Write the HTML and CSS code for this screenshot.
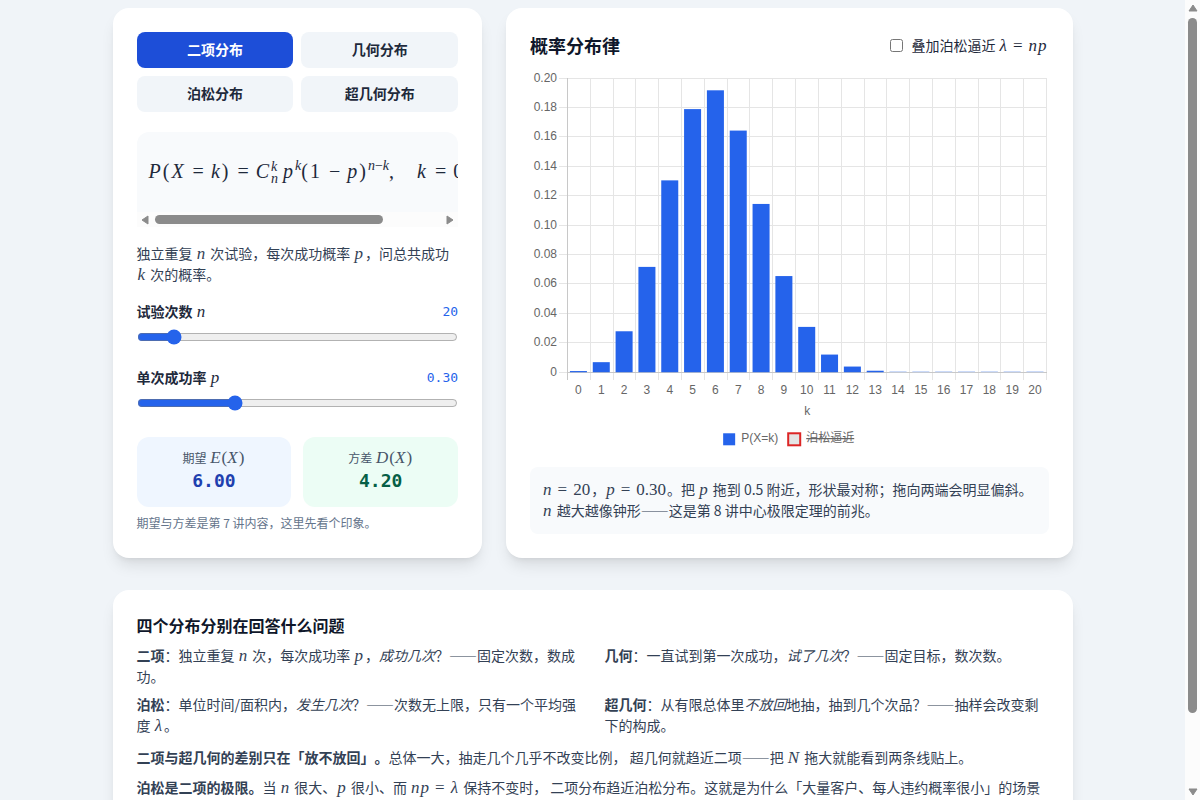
FILE: index.html
```html
<!DOCTYPE html>
<html lang="zh-CN">
<head>
<meta charset="utf-8">
<meta name="viewport" content="width=device-width, initial-scale=1">
<title>概率分布律</title>
<link rel="stylesheet" href="styles.css">
</head>
<body>
<div class="viewport">
<main class="page">
  <div class="top-grid">
    <section class="card">
      <div class="tabs">
        <button type="button" class="tab tab-active">二项分布</button>
        <button type="button" class="tab">几何分布</button>
        <button type="button" class="tab">泊松分布</button>
        <button type="button" class="tab">超几何分布</button>
      </div>
      <div class="formula-box">
        <div class="formula-view">
          <div class="formula"><i>P</i><span>(</span><i>X</i><b>=</b><i>k</i><span>)</span><b>=</b><i>C</i><span class="script-pair"><i>k</i><i>n</i></span><i>p</i><sup><i>k</i></sup><span>(</span><span>1</span><b>−</b><i>p</i><span>)</span><sup><i>n</i>−<i>k</i></sup><span class="comma">,</span><i>k</i><b>=</b><span>0</span></div>
        </div>
        <div class="bar-x" aria-hidden="true">
          <svg class="arrow" viewBox="0 0 8 10"><path d="M7 1v8L1 5z"/></svg>
          <div class="track"><div class="thumb"></div></div>
          <svg class="arrow" viewBox="0 0 8 10"><path d="M1 1v8l6-4z"/></svg>
        </div>
      </div>
      <p class="desc">独立重复 <i class="m">n</i> 次试验，每次成功概率 <i class="m">p</i>，问总共成功 <i class="m">k</i> 次的概率。</p>
      <div class="field">
        <div class="field-head"><label for="trials">试验次数 <i class="m">n</i></label><output for="trials">20</output></div>
        <input id="trials" type="range" min="1" max="200" value="20">
      </div>
      <div class="field">
        <div class="field-head"><label for="prob">单次成功率 <i class="m">p</i></label><output for="prob">0.30</output></div>
        <input id="prob" type="range" min="0.01" max="0.99" step="0.01" value="0.3">
      </div>
      <div class="stats">
        <div class="stat stat-blue"><div class="stat-label">期望 <span class="m"><i>E</i>(<i>X</i>)</span></div><div class="stat-value">6.00</div></div>
        <div class="stat stat-green"><div class="stat-label">方差 <span class="m"><i>D</i>(<i>X</i>)</span></div><div class="stat-value">4.20</div></div>
      </div>
      <p class="hint">期望与方差是第 7 讲内容，这里先看个印象。</p>
    </section>

    <section class="card">
      <div class="chart-head">
        <h2>概率分布律</h2>
        <label class="overlay"><input type="checkbox"> <span>叠加泊松逼近 <span class="m"><i>λ</i><b>=</b><i>n</i><i>p</i></span></span></label>
      </div>
      <svg id="chart" class="chart" viewBox="0 0 518 380" role="img" aria-label="P(X=k)"></svg>
      <p class="note"><span class="m"><i>n</i><b>=</b>20</span>，<span class="m"><i>p</i><b>=</b>0.30</span>。把 <i class="m">p</i> 拖到 0.5 附近，形状最对称；拖向两端会明显偏斜。 <i class="m">n</i> 越大越像钟形——这是第 8 讲中心极限定理的前兆。</p>
    </section>
  </div>

  <section class="card">
    <h3>四个分布分别在回答什么问题</h3>
    <div class="answers">
      <p><strong>二项</strong>：独立重复 <i class="m">n</i> 次，每次成功率 <i class="m">p</i>，<em>成功几次</em>？——固定次数，数成功。</p>
      <p><strong>几何</strong>：一直试到第一次成功，<em>试了几次</em>？——固定目标，数次数。</p>
      <p><strong>泊松</strong>：单位时间/面积内，<em>发生几次</em>？——次数无上限，只有一个平均强度 <i class="m">λ</i>。</p>
      <p><strong>超几何</strong>：从有限总体里<em>不放回</em>地抽，抽到几个次品？——抽样会改变剩下的构成。</p>
    </div>
    <p class="remark"><strong>二项与超几何的差别只在「放不放回」。</strong>总体一大，抽走几个几乎不改变比例， 超几何就趋近二项——把 <i class="m">N</i> 拖大就能看到两条线贴上。</p>
    <p class="remark"><strong>泊松是二项的极限。</strong>当 <i class="m">n</i> 很大、<i class="m">p</i> 很小、而 <span class="m"><i>n</i><i>p</i><b>=</b><i>λ</i></span> 保持不变时， 二项分布趋近泊松分布。这就是为什么「大量客户、每人违约概率很小」的场景</p>
  </section>
</main>
</div>
<div class="bar-y" aria-hidden="true">
  <svg class="arrow" viewBox="0 0 10 8"><path d="M1 7h8L5 1z"/></svg>
  <div class="track"><div class="thumb"></div></div>
  <svg class="arrow" viewBox="0 0 10 8"><path d="M1 1h8L5 7z"/></svg>
</div>
<script src="chart.js"></script>
</body>
</html>
```
FILE: styles.css
```css
* { box-sizing: border-box; }
body {
  display: flex;
  height: 100vh;
  margin: 0;
  overflow: hidden;
  background: #f0f4f8;
  color: #1e293b;
  font-family: "Noto Sans CJK SC", "Noto Sans", sans-serif;
  font-size: 14px;
  line-height: 21px;
  text-spacing-trim: space-all;
}
h2, h3, p { margin: 0; }
.viewport { flex: 1; min-width: 0; overflow-y: auto; }
.page {
  max-width: 976px;
  margin: 0 auto;
  padding: 8px;
}

.bar-y, .bar-x { display: flex; align-items: center; background: #fcfcfc; }
.bar-y { flex-direction: column; width: 15px; padding: 4px 0; }
.bar-x { height: 15px; padding: 0 4px; }
.arrow { flex: none; fill: #8b8b8b; stroke: #8b8b8b; stroke-linejoin: round; }
.bar-y .arrow { width: 10px; height: 8px; }
.bar-x .arrow { width: 8px; height: 10px; }
.track { flex: 1; }
.bar-y .track { margin: 6px 0; }
.bar-x .track { margin: 0 6px; }
.thumb { border-radius: 5px; background: #8b8b8b; }
.bar-y .thumb { width: 9px; height: 91%; }
.bar-x .thumb { width: 80%; height: 9px; }

.top-grid {
  display: grid;
  grid-template-columns: repeat(5, minmax(0, 1fr));
  gap: 24px;
  margin-bottom: 32px;
}
.top-grid > .card:first-child { grid-column: span 2; }
.top-grid > .card:last-child { grid-column: span 3; }
.card {
  padding: 24px;
  border-radius: 16px;
  background: #fff;
  box-shadow: 0 10px 15px -3px rgb(0 0 0 / 0.1), 0 4px 6px -4px rgb(0 0 0 / 0.1);
}
.tabs {
  display: grid;
  grid-template-columns: 1fr 1fr;
  gap: 8px;
  margin-bottom: 20px;
}
.tab {
  height: 36px;
  padding: 0 0 2px;
  border: 0;
  border-radius: 8px;
  background: #f1f5f9;
  color: #1e293b;
  font: inherit;
  font-weight: 700;
}
.tab-active { background: #1d4ed8; color: #fff; }

.m {
  margin: 0 1px;
  font-family: "Liberation Serif", serif;
  font-size: 17px;
  line-height: 1;
  white-space: nowrap;
}
i.m, .m i { padding-right: 1px; }
.m b { font-weight: 400; padding: 0 6px 0 5px; }
.formula-box {
  overflow: hidden;
  border-radius: 12px 12px 0 0;
  background: #f8fafc;
  margin-bottom: 16px;
}
.formula-view { overflow: hidden; padding: 12px; padding-right: 0; }
.formula {
  width: max-content;
  padding: 15px 0;
  font-family: "Liberation Serif", serif;
  font-size: 20px;
  line-height: 24px;
  white-space: nowrap;
}
.formula > i, .formula > span { margin-right: 2px; }
.formula > b { font-weight: 400; padding: 0 7px; }
.formula sup {
  font-size: 14px;
  line-height: 0;
  vertical-align: 8px;
}
.formula .comma { margin-right: 23px; }
.formula .script-pair {
  display: inline-flex;
  flex-direction: column;
  vertical-align: middle;
  margin-right: 5px;
  font-size: 14px;
  line-height: 12px;
}
.desc { color: #334155; margin-bottom: 16px; }
.field { margin-bottom: 22px; }
.field-head {
  display: flex;
  justify-content: space-between;
  align-items: center;
  height: 20px;
  margin-bottom: 8px;
}
.field label { font-weight: 700; }
.field .m { font-weight: 400; }
.field output {
  color: #2563eb;
  font-family: "DejaVu Sans Mono", monospace;
  font-size: 13px;
}
.field input {
  display: block;
  width: 100%;
  height: 16px;
  margin: 0;
  accent-color: #2563eb;
}
.stats {
  display: grid;
  grid-template-columns: 1fr 1fr;
  gap: 12px;
  margin: 26px 0 8px;
}
.stat { padding: 12px; border-radius: 12px; text-align: center; }
.stat-label { color: #475569; font-size: 12px; line-height: 18px; }
.stat-value {
  font-family: "DejaVu Sans Mono", monospace;
  font-size: 18px;
  font-weight: 700;
  line-height: 28px;
}
.stat-blue { background: #eff6ff; }
.stat-blue .stat-value { color: #1e40af; }
.stat-green { background: #ecfdf5; }
.stat-green .stat-value { color: #065f46; }
.hint { color: #64748b; font-size: 12px; line-height: 16px; }

.chart-head {
  display: flex;
  justify-content: space-between;
  align-items: center;
  height: 26px;
  margin-bottom: 14px;
}
h2 { color: #0f172a; font-size: 18px; line-height: 26px; }
.overlay { display: flex; align-items: center; gap: 8px; }
.overlay input { width: 13px; height: 13px; margin: 0; }
.chart {
  display: block;
  width: 100%;
  margin-bottom: 15px;
  font-family: "Liberation Sans", "Noto Sans CJK SC", sans-serif;
  font-size: 12px;
}
.chart text { fill: #666; }
.chart .grid { stroke: #e5e5e5; shape-rendering: crispEdges; }
.chart .axis { stroke: #c8c8c8; shape-rendering: crispEdges; }
.chart .bar { fill: #2563eb; }
.chart .bar-tiny { fill: #bccff7; }
.chart .struck { text-decoration: line-through; }
.note {
  padding: 12px 12px 13px;
  border-radius: 8px;
  background: #f8fafc;
  color: #334155;
}
h3 { color: #0f172a; font-size: 16px; line-height: 22px; margin-bottom: 9px; }
.answers {
  display: grid;
  grid-template-columns: 1fr 1fr;
  gap: 7px 24px;
  color: #334155;
  margin-bottom: 11px;
}
.remark { color: #334155; margin-bottom: 9px; }
```
FILE: chart.js
```js
const svg = document.getElementById("chart");
const NS = "http://www.w3.org/2000/svg";
const left = 37, top0 = 6, bottom = 300, right = 516;
const n = 20, p = 0.3, maxY = 0.2;
const step = (right - left) / (n + 1);

function add(name, attrs, text) {
  const el = document.createElementNS(NS, name);
  for (const key in attrs) el.setAttribute(key, attrs[key]);
  if (text !== undefined) el.textContent = text;
  svg.appendChild(el);
}
function line(x1, y1, x2, y2, cls) {
  add("line", { x1, y1, x2, y2, class: cls });
}

for (let i = 0; i <= 10; i++) {
  const y = Math.floor(bottom - (i * (bottom - top0)) / 10) + 0.5;
  line(left - 8, y, right + 1, y, "grid");
  add("text", { x: left - 10, y: y + 3.5, "text-anchor": "end" }, i ? (i * 0.02).toFixed(2) : "0");
}
for (let i = 0; i <= n + 1; i++) {
  const x = Math.round(left + i * step) + 0.5;
  line(x, top0, x, bottom + 8, "grid");
}
line(left + 0.5, top0, left + 0.5, bottom + 8, "axis");
line(left, bottom + 0.5, right + 1, bottom + 0.5, "axis");

let prob = Math.pow(1 - p, n);
for (let k = 0; k <= n; k++) {
  const center = left + (k + 0.5) * step;
  const h = Math.max((prob / maxY) * (bottom - top0), 1);
  add("rect", {
    x: center - 8.5, y: bottom - h, width: 17, height: h,
    class: prob < 0.0005 ? "bar-tiny" : "bar"
  });
  add("text", { x: center, y: 322, "text-anchor": "middle" }, k);
  prob = (prob * (n - k) * p) / ((k + 1) * (1 - p));
}
add("text", { x: 277, y: 343, "text-anchor": "middle" }, "k");
add("rect", { x: 193, y: 361, width: 12, height: 12, fill: "#2563eb" });
add("text", { x: 211, y: 370 }, "P(X=k)");
add("rect", { x: 258, y: 361, width: 12, height: 12, fill: "#e5e5e5", stroke: "#dc2626", "stroke-width": 2 });
add("text", { x: 276, y: 370, class: "struck" }, "泊松逼近");
```
